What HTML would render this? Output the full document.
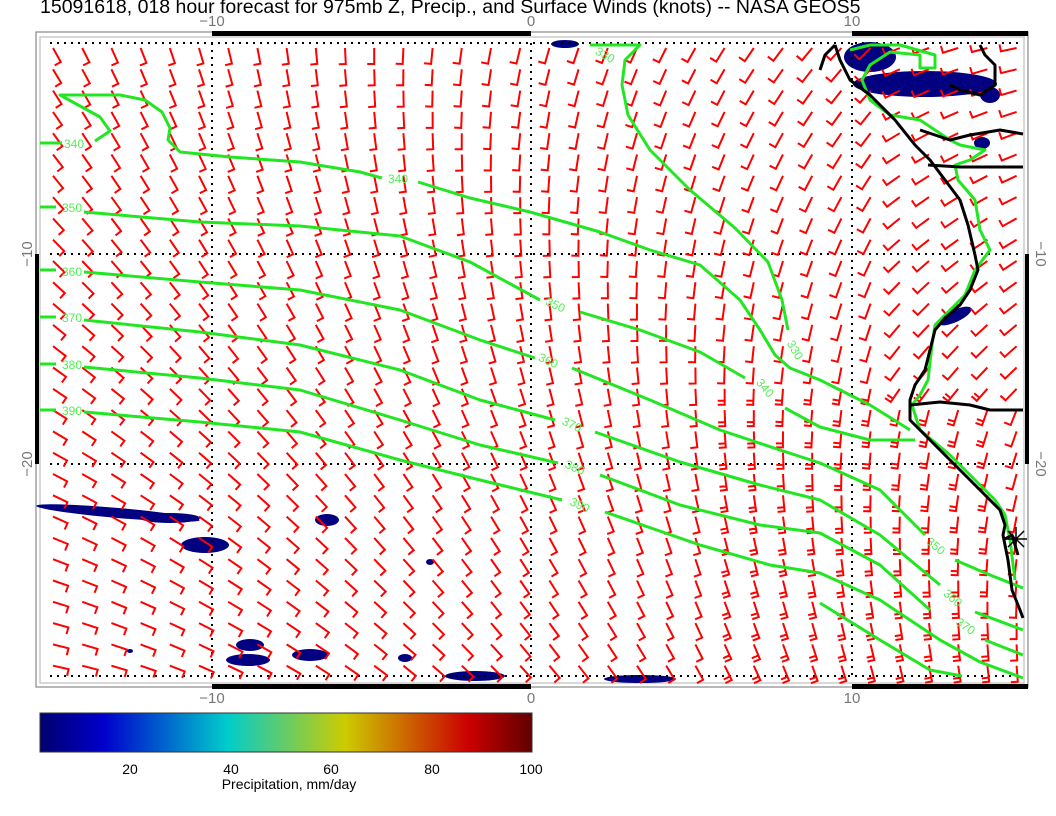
<!DOCTYPE html>
<html><head><meta charset="utf-8"><style>
html,body{margin:0;padding:0;background:#fff;}
svg{display:block}
text{font-family:"Liberation Sans",sans-serif}
</style></head><body>
<svg id="s" width="1056" height="816" viewBox="0 0 1056 816" xmlns="http://www.w3.org/2000/svg">
<defs>
<linearGradient id="cb" x1="0" x2="1" y1="0" y2="0">
<stop offset="0" stop-color="#00006e"/>
<stop offset="0.13" stop-color="#0000cc"/>
<stop offset="0.38" stop-color="#00cccc"/>
<stop offset="0.62" stop-color="#cccc00"/>
<stop offset="0.87" stop-color="#cc0000"/>
<stop offset="1" stop-color="#600000"/>
</linearGradient>
</defs>
<text x="40" y="13" font-size="19.5" fill="#000">15091618, 018 hour forecast for 975mb Z, Precip., and Surface Winds (knots) -- NASA GEOS5</text>
<rect x="36" y="32" width="992" height="655" fill="#fff" stroke="#888" stroke-width="1.2"/>
<rect x="40" y="37" width="984" height="646" fill="none" stroke="#ccc" stroke-width="1.5"/>
<g fill="#000080">
<ellipse cx="925" cy="84" rx="72" ry="13"/>
<ellipse cx="870" cy="57" rx="26" ry="15"/>
<ellipse cx="990" cy="95" rx="10" ry="8"/>
<ellipse cx="982" cy="143" rx="8" ry="6"/>
<ellipse cx="955" cy="316" rx="18" ry="6" transform="rotate(-25 955 316)"/>
<ellipse cx="118" cy="513" rx="82" ry="5" transform="rotate(5 118 513)"/>
<ellipse cx="170" cy="518" rx="30" ry="5"/>
<ellipse cx="205" cy="545" rx="24" ry="8"/>
<ellipse cx="327" cy="520" rx="12" ry="6"/>
<ellipse cx="430" cy="562" rx="4" ry="3"/>
<ellipse cx="250" cy="645" rx="14" ry="6"/>
<ellipse cx="248" cy="660" rx="22" ry="6"/>
<ellipse cx="310" cy="655" rx="18" ry="6"/>
<ellipse cx="405" cy="658" rx="7" ry="4"/>
<ellipse cx="475" cy="676" rx="30" ry="5"/>
<ellipse cx="640" cy="679" rx="36" ry="4"/>
<ellipse cx="565" cy="44" rx="14" ry="4"/>
<ellipse cx="130" cy="651" rx="3" ry="2"/>
</g>
<g stroke="#000" stroke-width="2" stroke-dasharray="2,5" fill="none">
<line x1="50" y1="43" x2="1022" y2="43"/>
<line x1="50" y1="254" x2="1022" y2="254"/>
<line x1="50" y1="464" x2="1022" y2="464"/>
<line x1="50" y1="676" x2="1022" y2="676"/>
<line x1="212" y1="43" x2="212" y2="676"/>
<line x1="531" y1="43" x2="531" y2="676"/>
<line x1="852" y1="43" x2="852" y2="676"/>
</g>
<g id="barbs" stroke="#ff0000" stroke-width="2" fill="none" stroke-linecap="butt"></g>
<g stroke="#22e622" stroke-width="3" fill="none" stroke-linejoin="round">
<polyline points="40,143 62,143"/>
<polyline points="95,141 110,131 100,117 80,106 60,95 120,95 145,100 162,112 170,128 168,140 180,152 230,157 300,162 360,172 382,178"/>
<polyline points="418,182 470,198 530,212 600,232 650,250 700,265 740,300 760,330 775,355 790,368 820,380 870,405 910,430"/>
<polyline points="590,45 640,45 625,60 622,85 628,115 650,150 690,190 735,228 768,262 782,300 788,330"/>
<polyline points="40,207 56,207"/>
<polyline points="84,212 200,222 300,226 400,236 470,262 540,300"/>
<polyline points="580,312 640,330 700,352 745,378"/>
<polyline points="785,408 820,427 870,440 915,440"/>
<polyline points="40,270 56,270"/>
<polyline points="84,272 200,282 300,290 400,310 480,340 535,358"/>
<polyline points="572,368 650,400 720,430 780,450 820,463 880,490 925,535"/>
<polyline points="955,560 990,575 1023,588"/>
<polyline points="40,317 56,317"/>
<polyline points="84,320 200,332 300,345 400,370 480,400 555,420"/>
<polyline points="595,432 680,462 760,485 820,500 880,535 940,585"/>
<polyline points="975,612 1023,630"/>
<polyline points="40,364 56,364"/>
<polyline points="84,367 200,378 300,390 400,420 480,445 558,463"/>
<polyline points="600,475 680,505 760,525 820,533 880,565 930,610"/>
<polyline points="985,640 1023,655"/>
<polyline points="40,410 56,410"/>
<polyline points="84,412 200,422 300,432 400,460 480,480 562,500"/>
<polyline points="605,512 700,545 770,565 820,573 880,600 940,640 980,662 1023,678"/>
<polyline points="820,603 880,640 930,670 962,676"/>
<polyline points="850,50 870,45 900,45 935,55 935,68 920,68 920,55 890,52 870,65 862,80 870,100 890,115 920,120 935,130 950,140 960,145 985,150 970,160 955,165 958,180 975,200 980,230 990,250 975,270 965,295 950,310 935,325 932,345 928,380 920,395 912,405 920,430 950,455 975,480 995,500 1005,515 1010,540 1015,580"/>
</g>
<g fill="#55ee55" font-size="12">
<text x="64" y="148">340</text>
<text x="62" y="212">350</text>
<text x="62" y="276">360</text>
<text x="62" y="322">370</text>
<text x="62" y="369">380</text>
<text x="62" y="415">390</text>
<text x="388" y="183">340</text>
<text x="545" y="311" transform="rotate(25 560 307)">350</text>
<text x="538" y="366" transform="rotate(25 551 362)">360</text>
<text x="562" y="430" transform="rotate(25 575 425)">370</text>
<text x="565" y="473" transform="rotate(25 578 468)">380</text>
<text x="570" y="510" transform="rotate(25 582 505)">390</text>
<text x="755" y="392" transform="rotate(50 765 388)">340</text>
<text x="785" y="354" transform="rotate(60 795 350)">330</text>
<text x="595" y="59" transform="rotate(30 605 55)">330</text>
<text x="925" y="552" transform="rotate(40 938 548)">350</text>
<text x="942" y="604" transform="rotate(40 955 600)">360</text>
<text x="955" y="632" transform="rotate(35 968 628)">370</text>
</g>
<g stroke="#000" stroke-width="3" fill="none" stroke-linejoin="round">
<polyline points="835,45 840,60 850,80 870,95 895,120 915,145 930,160 945,180 960,200 968,225 975,255 978,270 970,290 960,305 945,318 935,330 930,350 925,370 915,385 910,400 910,420 925,435 945,455 965,475 985,495 1000,510 1005,525 1003,535 1008,560 1012,590 1020,610 1023,618"/>
<polyline points="835,45 825,55 820,70"/>
<polyline points="980,45 985,55 995,65 995,85 980,95 960,90 950,85"/>
<polyline points="928,165 960,167 1023,167"/>
<polyline points="920,130 950,140 970,135 1000,130 1023,134"/>
<polyline points="910,405 940,402 970,405 990,410 1023,410"/>
<polyline points="1003,540 1012,535 1018,555"/>
</g>
<g stroke="#000" stroke-width="1.5">
<line x1="1005" y1="539" x2="1027" y2="539"/><line x1="1016" y1="527" x2="1016" y2="551"/>
<line x1="1008" y1="531" x2="1024" y2="547"/><line x1="1008" y1="547" x2="1024" y2="531"/>
</g>
<g fill="#000">
<rect x="212" y="31" width="319" height="5"/>
<rect x="852" y="31" width="176" height="5"/>
<rect x="212" y="684" width="319" height="5"/>
<rect x="852" y="684" width="176" height="5"/>
<rect x="35" y="254" width="4" height="210"/>
<rect x="1025" y="254" width="4" height="210"/>
</g>
<g fill="#777" font-size="15" text-anchor="middle">
<text x="212" y="26">−10</text><text x="531" y="26">0</text><text x="852" y="26">10</text>
<text x="212" y="703">−10</text><text x="531" y="703">0</text><text x="852" y="703">10</text>
<text transform="translate(32 254) rotate(-90)">−10</text>
<text transform="translate(32 464) rotate(-90)">−20</text>
<text transform="translate(1036 254) rotate(90)">−10</text>
<text transform="translate(1036 464) rotate(90)">−20</text>
</g>
<rect x="40" y="713" width="492" height="39" fill="url(#cb)" stroke="#333" stroke-width="1"/>
<g fill="#000" font-size="14" text-anchor="middle">
<text x="130" y="774">20</text><text x="231" y="774">40</text><text x="331" y="774">60</text>
<text x="432" y="774">80</text><text x="531" y="774">100</text>
<text x="289" y="789">Precipitation, mm/day</text>
</g>
</svg>
<script>
(function(){
var g=document.getElementById('barbs'),ns='http://www.w3.org/2000/svg',d='';
for(var j=0;j<30;j++){for(var i=0;i<34;i++){
var x=53+29.2*i,y=48+21.3*j;
var u=(x-40)/990,v=(y-43)/640;if(v>1)v=1;
var th=(1-u)*(1-v)*60+u*(1-v)*150+(1-u)*v*10+u*v*85;
if(u>0.85&&v<0.55)th+=20;
var a=th*Math.PI/180,dx=Math.cos(a),dy=Math.sin(a),L=16,T=7;
var ex=x+dx*L,ey=y+dy*L,tx=-dy,ty=dx;
d+='M'+x.toFixed(1)+' '+y.toFixed(1)+'L'+ex.toFixed(1)+' '+ey.toFixed(1)+'l'+(tx*T).toFixed(1)+' '+(ty*T).toFixed(1);
if(x>700&&y>380&&x<1000){var bx=ex-dx*4,by=ey-dy*4;d+='M'+bx.toFixed(1)+' '+by.toFixed(1)+'l'+(tx*T).toFixed(1)+' '+(ty*T).toFixed(1);}
}}
var p=document.createElementNS(ns,'path');p.setAttribute('d',d);g.appendChild(p);
})();
</script>
</body></html>
